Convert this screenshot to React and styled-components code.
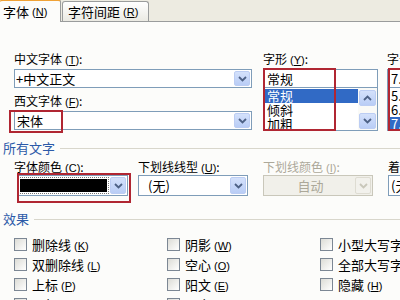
import React from "react";
import styled, { createGlobalStyle } from "styled-components";

const GlobalStyle = createGlobalStyle`
  html, body {
    margin: 0;
    padding: 0;
  }
  body {
    width: 400px;
    height: 300px;
    overflow: hidden;
    background: #fcfcfa;
    font-family: "Noto Sans CJK SC", "DejaVu Sans", sans-serif;
    color: #000;
  }
`;

const Dialog = styled.div`
  width: 400px;
  height: 300px;
  overflow: hidden;
  background: #fcfcfa;
`;

const TabStrip = styled.div`
  height: 22px;
  box-sizing: border-box;
  background: #edebe1;
  border-bottom: 1px solid #9a9c9c;
  display: flex;
  align-items: flex-end;
`;

const Tab = styled.div`
  box-sizing: border-box;
  display: flex;
  align-items: center;
  font-size: 13px;
  white-space: nowrap;
  height: ${(p) => (p.$active ? "23px" : "20px")};
  margin-bottom: ${(p) => (p.$active ? "-1px" : "0")};
  width: ${(p) => (p.$active ? "61px" : "87px")};
  padding-left: ${(p) => (p.$active ? "3px" : "5px")};
  margin-left: ${(p) => (p.$active ? "0" : "1px")};
  background: ${(p) =>
    p.$active ? "#fcfcfa" : "linear-gradient(#ffffff, #ebeae3)"};
  border: 1px solid #9a9c9c;
  border-left: ${(p) => (p.$active ? "none" : "1px solid #9a9c9c")};
  border-bottom: none;
  border-top: ${(p) =>
    p.$active ? "2px solid #f0a236" : "1px solid #9a9c9c"};
  border-radius: 3px 3px 0 0;
`;

const Panel = styled.div`
  padding-left: 14px;
  display: flex;
  flex-direction: column;
`;

const TopRow = styled.div`
  margin-top: 30px;
  display: flex;
`;

const Column = styled.div`
  width: ${(p) => p.$width}px;
  margin-left: ${(p) => p.$gap || 0}px;
  flex-shrink: 0;
  display: flex;
  flex-direction: column;
`;

const Label = styled.div`
  font-size: 12px;
  line-height: 14px;
  height: 14px;
  white-space: nowrap;
  color: ${(p) => (p.$disabled ? "#aca899" : "#000")};
  margin-top: ${(p) => p.$top || 0}px;
`;

const Key = styled.span`
  font-family: "Liberation Sans", "DejaVu Sans", sans-serif;
  font-size: 11px;
  margin-left: 3px;
`;

const Combo = styled.div`
  position: relative;
  box-sizing: border-box;
  height: ${(p) => p.$height || 19}px;
  width: ${(p) => (p.$width ? `${p.$width}px` : "100%")};
  margin-top: ${(p) => p.$top ?? 3}px;
  margin-left: ${(p) => p.$left || 0}px;
  border: 1px solid ${(p) => (p.$disabled ? "#c9c7ba" : "#7f9db9")};
  background: ${(p) => (p.$disabled ? "#f1f0ea" : "#fff")};
  display: flex;
  align-items: center;
  font-size: 13px;
  white-space: nowrap;
`;

const ComboText = styled.span`
  flex: 1;
  padding-left: ${(p) => p.$pad ?? 2}px;
  text-align: ${(p) => (p.$center ? "center" : "left")};
  color: ${(p) => (p.$disabled ? "#aca899" : "#000")};
  line-height: 15px;
`;

const Swatch = styled.span`
  flex: 1;
  height: 13px;
  margin: 0 3px 0 2px;
  background: #000;
  outline: 1px dotted #777;
  outline-offset: 1px;
`;

const DropButton = styled.span`
  width: 16px;
  height: ${(p) => p.$h || 15}px;
  margin-right: 1px;
  flex-shrink: 0;
  box-sizing: border-box;
  border-radius: 2px;
  display: flex;
  align-items: center;
  justify-content: center;
  border: 1px solid ${(p) => (p.$disabled ? "#dedcd2" : "#bccdf3")};
  background: ${(p) =>
    p.$disabled
      ? "#f2f1ec"
      : "linear-gradient(#d4e1fb, #b9cdf6)"};
`;

const FieldStack = styled.div`
  position: relative;
  margin-top: 3px;
  display: flex;
  flex-direction: column;
`;

const TextBox = styled.div`
  box-sizing: border-box;
  height: 19px;
  border: 1px solid #7f9db9;
  background: #fff;
  font-size: 13px;
  line-height: 17px;
  padding-left: 3px;
  white-space: nowrap;
`;

const ListBox = styled.div`
  box-sizing: border-box;
  height: 43px;
  border: 1px solid #7f9db9;
  border-top: none;
  background: #fff;
  display: flex;
`;

const Items = styled.div`
  flex: 1;
  display: flex;
  flex-direction: column;
  padding-top: 1px;
`;

const Item = styled.div`
  height: 14px;
  line-height: 14px;
  font-size: 13px;
  padding-left: 3px;
  white-space: nowrap;
  background: ${(p) => (p.$selected ? "#316ac5" : "transparent")};
  color: ${(p) => (p.$selected ? "#fff" : "#000")};
`;

const ScrollBar = styled.div`
  width: 19px;
  flex-shrink: 0;
  display: flex;
  flex-direction: column;
  justify-content: space-between;
  padding: 2px 1px 1px 1px;
  box-sizing: border-box;
  background: #fafaf7;
`;

const ScrollButton = styled.span`
  height: 16px;
  box-sizing: border-box;
  border-radius: 2px;
  border: 1px solid #bccdf3;
  background: linear-gradient(#d4e1fb, #b9cdf6);
  display: flex;
  align-items: center;
  justify-content: center;
`;

const Annot = styled.div`
  position: absolute;
  top: ${(p) => p.$top}px;
  left: ${(p) => p.$left}px;
  width: ${(p) => p.$w}px;
  height: ${(p) => p.$h}px;
  box-sizing: border-box;
  border: 2px solid #b02632;
  pointer-events: none;
`;

const SectionTitle = styled.div`
  margin-left: -11px;
  margin-top: ${(p) => p.$top}px;
  display: flex;
  align-items: center;
  font-size: 13px;
  line-height: 15px;
  height: 15px;
  color: #2c5aa8;
  white-space: nowrap;
  &::after {
    content: "";
    flex: 1;
    height: 1px;
    margin-left: 5px;
    margin-top: 1px;
    background: #d8d6cb;
  }
`;

const FieldRow = styled.div`
  margin-top: 5px;
  display: flex;
`;

const Group = styled.div`
  width: ${(p) => p.$width}px;
  flex-shrink: 0;
  display: flex;
  flex-direction: column;
`;

const EffectsGrid = styled.div`
  margin-top: 11px;
  display: grid;
  grid-template-columns: 153px 153px 153px;
  row-gap: 6px;
`;

const Check = styled.label`
  display: flex;
  align-items: center;
  height: 14px;
  gap: 5px;
  font-size: 13px;
  white-space: nowrap;
`;

const Box = styled.span`
  width: 13px;
  height: 13px;
  flex-shrink: 0;
  box-sizing: border-box;
  border: 1px solid #7c8794;
  background: linear-gradient(135deg, #dcdcd6, #ffffff);
`;

const Chevron = ({ up, color = "#4d6185" }) => (
  <svg width="9" height="6" viewBox="0 0 9 6">
    <path
      d={up ? "M1 5 L4.5 1.5 L8 5" : "M1 1 L4.5 4.5 L8 1"}
      fill="none"
      stroke={color}
      strokeWidth="1.8"
    />
  </svg>
);

const K = ({ k }) => (
  <Key>
    (<u>{k}</u>)
  </Key>
);

const effects = [
  ["删除线", "K"],
  ["阴影", "W"],
  ["小型大写字母", "M"],
  ["双删除线", "L"],
  ["空心", "O"],
  ["全部大写字母", "A"],
  ["上标", "P"],
  ["阳文", "E"],
  ["隐藏", "H"],
  ["下标", "B"],
  ["阴文", "G"],
];

const App = () => {
  return (
    <Dialog>
      <GlobalStyle />
      <TabStrip>
        <Tab $active>
          字体<K k="N" />
        </Tab>
        <Tab>
          字符间距<K k="R" />
        </Tab>
      </TabStrip>

      <Panel>
        <TopRow>
          <Column $width={238}>
            <Label>
              中文字体<K k="T" />:
            </Label>
            <Combo>
              <ComboText $pad={1}>+中文正文</ComboText>
              <DropButton>
                <Chevron />
              </DropButton>
            </Combo>
            <Label $top={6}>
              西文字体<K k="F" />:
            </Label>
            <Combo>
              <ComboText>宋体</ComboText>
              <DropButton>
                <Chevron />
              </DropButton>
              <Annot $top={-2} $left={-6} $w={54} $h={23} />
            </Combo>
          </Column>

          <Column $width={115} $gap={11}>
            <Label>
              字形<K k="Y" />:
            </Label>
            <FieldStack>
              <TextBox>常规</TextBox>
              <ListBox>
                <Items>
                  <Item $selected>常规</Item>
                  <Item>倾斜</Item>
                  <Item>加粗</Item>
                </Items>
                <ScrollBar>
                  <ScrollButton>
                    <Chevron up />
                  </ScrollButton>
                  <ScrollButton>
                    <Chevron />
                  </ScrollButton>
                </ScrollBar>
              </ListBox>
              <Annot $top={-1} $left={0} $w={73} $h={63} />
            </FieldStack>
          </Column>

          <Column $width={60} $gap={9}>
            <Label>
              字号<K k="S" />:
            </Label>
            <FieldStack>
              <TextBox>7.5</TextBox>
              <ListBox>
                <Items>
                  <Item>5.5</Item>
                  <Item>6.5</Item>
                  <Item $selected>7.5</Item>
                </Items>
              </ListBox>
              <Annot $top={-1} $left={1} $w={40} $h={63} />
            </FieldStack>
          </Column>
        </TopRow>

        <SectionTitle $top={9}>所有文字</SectionTitle>
        <FieldRow>
          <Group $width={124}>
            <Label>
              字体颜色<K k="C" />:
            </Label>
            <Combo $height={21} $top={1} $left={3} $width={111}>
              <Swatch />
              <DropButton $h={17}>
                <Chevron />
              </DropButton>
              <Annot $top={-3} $left={-1} $w={114} $h={30} />
            </Combo>
          </Group>
          <Group $width={125}>
            <Label>
              下划线线型<K k="U" />:
            </Label>
            <Combo $height={21} $top={1} $width={110}>
              <ComboText $pad={9}>(无)</ComboText>
              <DropButton $h={17}>
                <Chevron />
              </DropButton>
            </Combo>
          </Group>
          <Group $width={125}>
            <Label $disabled>
              下划线颜色<K k="I" />:
            </Label>
            <Combo $height={21} $top={1} $width={110} $disabled>
              <ComboText $center $disabled>
                自动
              </ComboText>
              <DropButton $h={17} $disabled>
                <Chevron color="#c9c7ba" />
              </DropButton>
            </Combo>
          </Group>
          <Group $width={100}>
            <Label>
              着重号<K k="·" />:
            </Label>
            <Combo $height={21} $top={1} $width={100}>
              <ComboText>(无)</ComboText>
            </Combo>
          </Group>
        </FieldRow>

        <SectionTitle $top={15}>效果</SectionTitle>
        <EffectsGrid>
          {effects.map(([text, k]) => (
            <Check key={text}>
              <Box />
              <span>
                {text}
                <K k={k} />
              </span>
            </Check>
          ))}
        </EffectsGrid>
      </Panel>
    </Dialog>
  );
};

export default App;
